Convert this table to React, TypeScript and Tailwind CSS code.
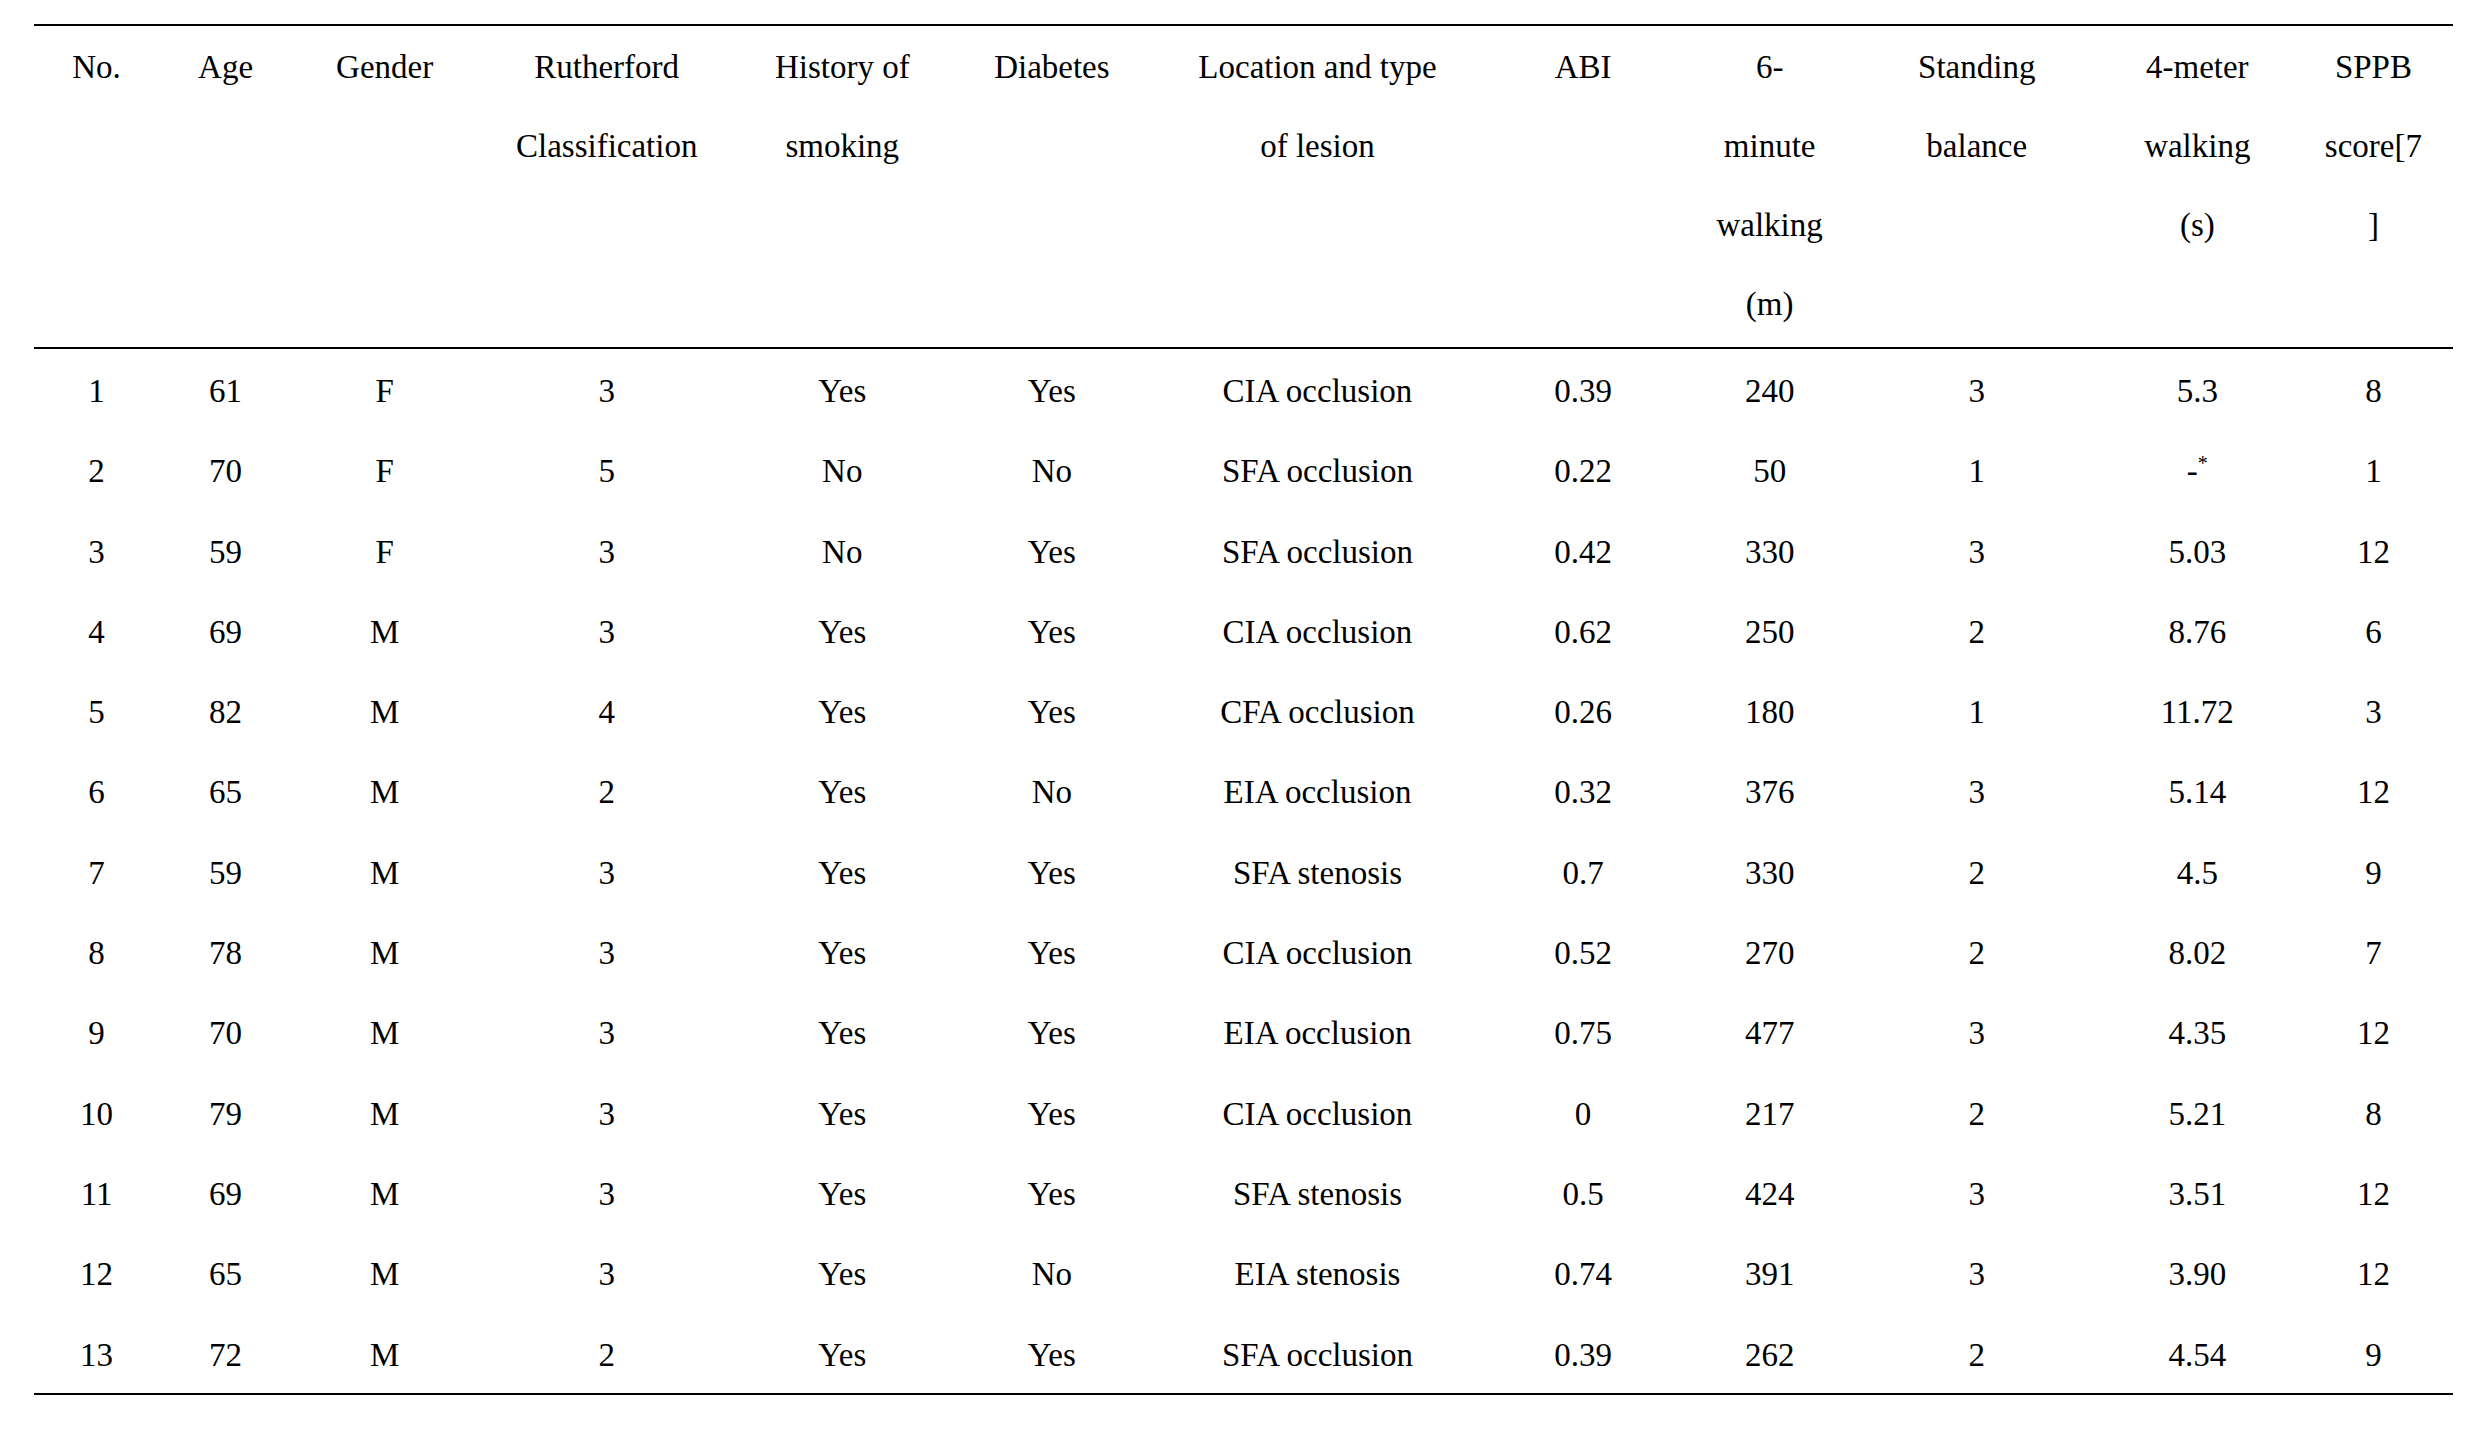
import React from "react";

const cols = [
    "w-[125px]",
    "w-[133px]",
    "w-[185px]",
    "w-[259px]",
    "w-[212px]",
    "w-[207px]",
    "w-[324px]",
    "w-[207px]",
    "w-[166px]",
    "w-[248px]",
    "w-[193px]",
    "w-[159px]",
];

const headers: string[][] = [
    ["No."],
    ["Age"],
    ["Gender"],
    ["Rutherford", "Classification"],
    ["History of", "smoking"],
    ["Diabetes"],
    ["Location and type", "of lesion"],
    ["ABI"],
    ["6-", "minute", "walking", "(m)"],
    ["Standing", "balance"],
    ["4-meter", "walking", "(s)"],
    ["SPPB", "score[7", "]"],
];

const rows: string[][] = [
    ["1", "61", "F", "3", "Yes", "Yes", "CIA occlusion", "0.39", "240", "3", "5.3", "8"],
    ["2", "70", "F", "5", "No", "No", "SFA occlusion", "0.22", "50", "1", "-*", "1"],
    ["3", "59", "F", "3", "No", "Yes", "SFA occlusion", "0.42", "330", "3", "5.03", "12"],
    ["4", "69", "M", "3", "Yes", "Yes", "CIA occlusion", "0.62", "250", "2", "8.76", "6"],
    ["5", "82", "M", "4", "Yes", "Yes", "CFA occlusion", "0.26", "180", "1", "11.72", "3"],
    ["6", "65", "M", "2", "Yes", "No", "EIA occlusion", "0.32", "376", "3", "5.14", "12"],
    ["7", "59", "M", "3", "Yes", "Yes", "SFA stenosis", "0.7", "330", "2", "4.5", "9"],
    ["8", "78", "M", "3", "Yes", "Yes", "CIA occlusion", "0.52", "270", "2", "8.02", "7"],
    ["9", "70", "M", "3", "Yes", "Yes", "EIA occlusion", "0.75", "477", "3", "4.35", "12"],
    ["10", "79", "M", "3", "Yes", "Yes", "CIA occlusion", "0", "217", "2", "5.21", "8"],
    ["11", "69", "M", "3", "Yes", "Yes", "SFA stenosis", "0.5", "424", "3", "3.51", "12"],
    ["12", "65", "M", "3", "Yes", "No", "EIA stenosis", "0.74", "391", "3", "3.90", "12"],
    ["13", "72", "M", "2", "Yes", "Yes", "SFA occlusion", "0.39", "262", "2", "4.54", "9"],
];

function Cell({ value }: { value: string }) {
    // the missing walking time carries a footnote mark
    if (value === "-*") {
        return (
            <>
                -<span className="relative -top-[12px] text-[20px] leading-none">*</span>
            </>
        );
    }
    return <>{value}</>;
}

export default function App() {
    return (
        <div className="min-h-screen bg-white text-black font-['Liberation_Serif','Times_New_Roman',serif]">
            <div className="pt-[24px] pl-[34px]">
                <table className="w-[2419px] table-fixed border-separate border-spacing-0 text-[33px] text-center">
                    <colgroup>
                        {cols.map((w, i) => (
                            <col key={i} className={w} />
                        ))}
                    </colgroup>
                    <thead>
                        <tr>
                            {headers.map((lines, i) => (
                                <th
                                    key={i}
                                    className="font-normal align-top border-t-2 border-b-2 border-black pt-[2px] pb-[3px] leading-[79px]"
                                >
                                    {lines.map((l, j) => (
                                        <div key={j}>{l}</div>
                                    ))}
                                </th>
                            ))}
                        </tr>
                    </thead>
                    <tbody>
                        {rows.map((row, r) => (
                            <tr key={r}>
                                {row.map((v, c) => (
                                    <td
                                        key={c}
                                        className={`px-0 pt-[5px] pb-0 align-top leading-[75.3px] whitespace-nowrap ${
                                            r === rows.length - 1 ? "border-b-2 border-black" : ""
                                        }`}
                                    >
                                        <Cell value={v} />
                                    </td>
                                ))}
                            </tr>
                        ))}
                    </tbody>
                </table>
            </div>
        </div>
    );
}
